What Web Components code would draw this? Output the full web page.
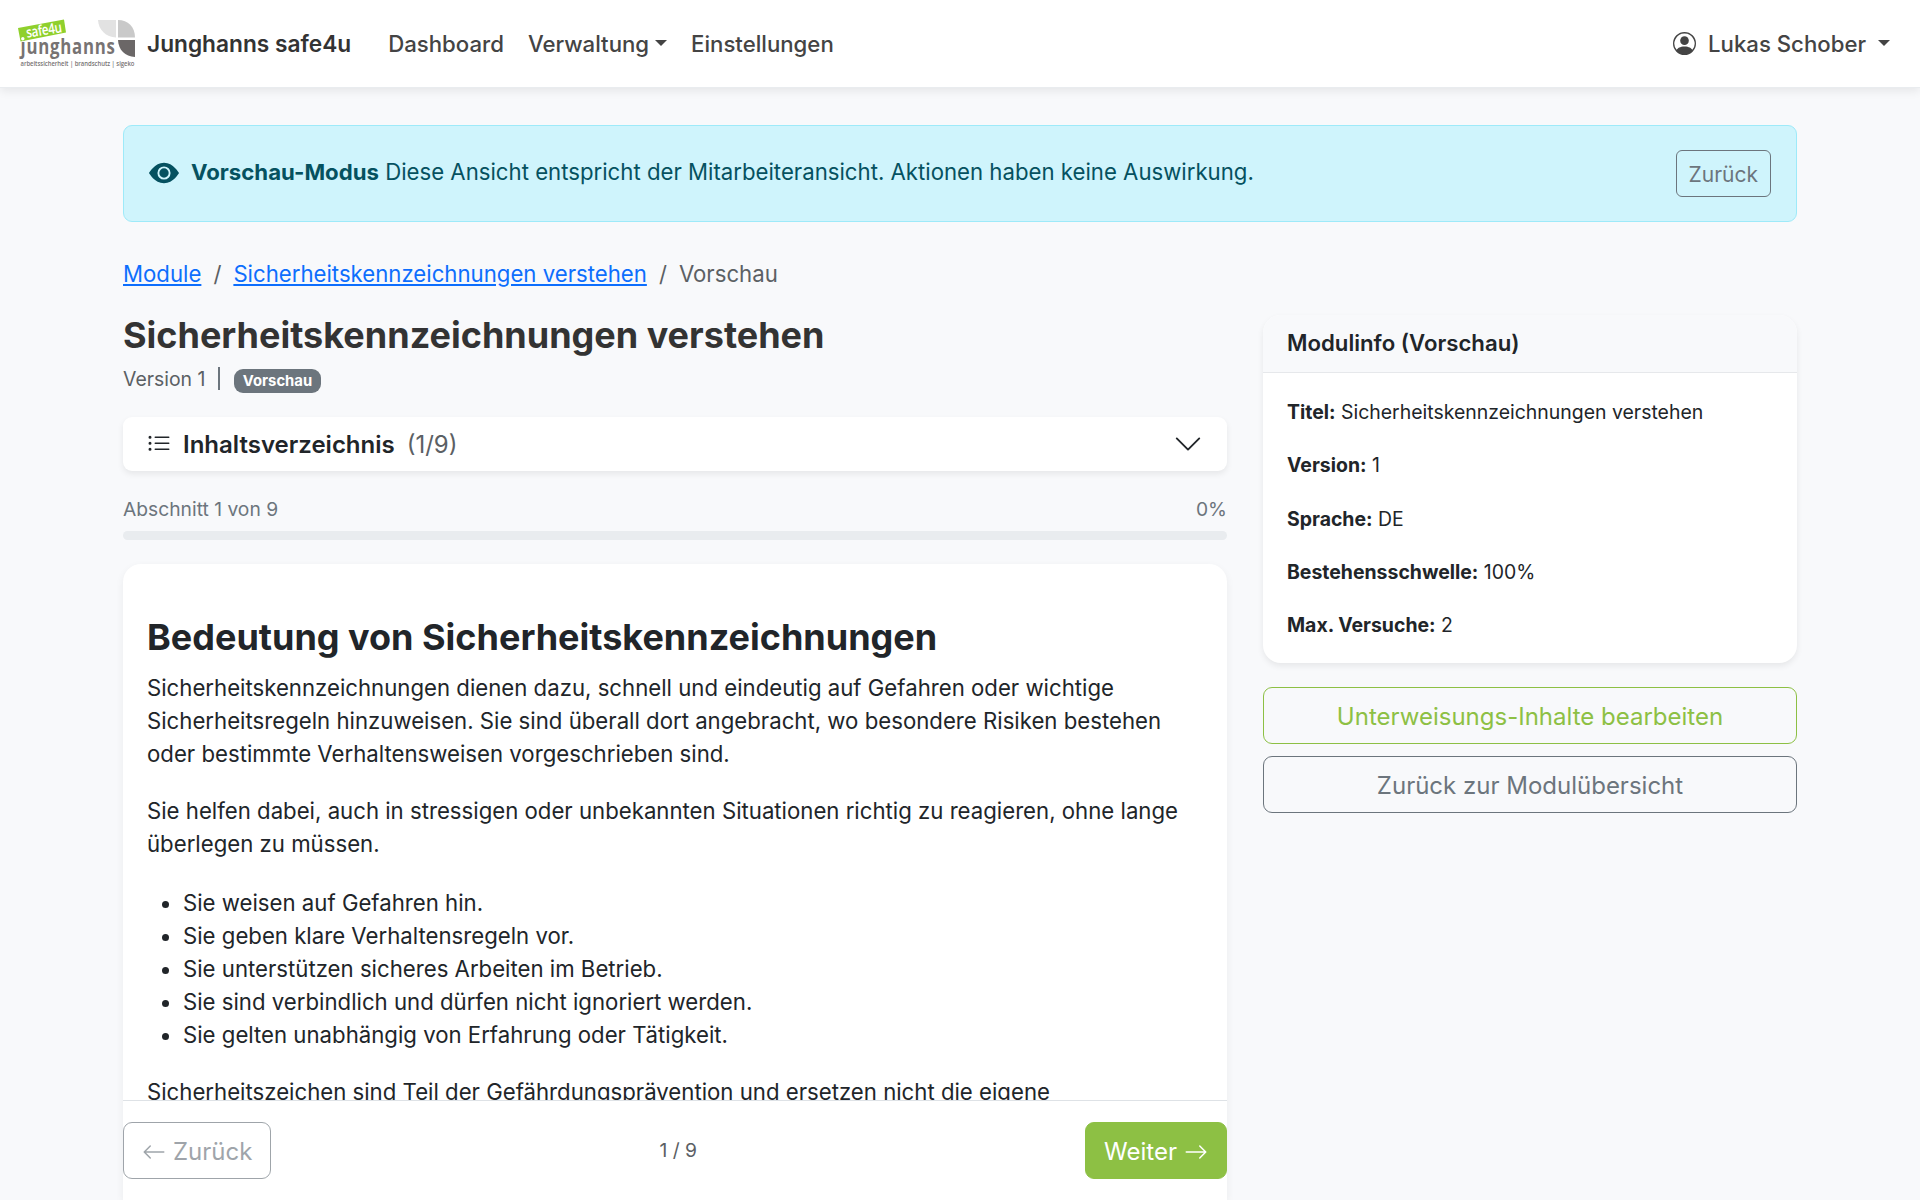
<!DOCTYPE html>
<html lang="de">
<head>
<meta charset="utf-8">
<title>Junghanns safe4u</title>
<style>
    html, body {
        height: 100%;
    }
    body {
        margin: 0;
        overflow: hidden;
        background: #f8f9fb;
        color: #212529;
        font-family: Inter, "Liberation Sans", sans-serif;
        font-size: 22.200px;
        line-height: 33px;
    }
</style>
</head>
<body>
<safe-app></safe-app>

<script>
customElements.define( 'safe-logo', class extends HTMLElement {

    constructor() {
        super();
        this.attachShadow({ mode: 'open' }).innerHTML = `
        <style>
            :host {
                display: block;
                width: 120px;
                height: 52px;
            }
            svg {
                display: block;
                overflow: visible;
            }
        </style>
        <svg width="120" height="52" viewBox="16 18 120 52" font-family="'Open Sans', sans-serif">
            <path fill="#e2e2e2" d="M98 20h18v17.500C106 37 98.500 30 98 20z"/>
            <path fill="#c9c9c9" d="M118 20c10 0 17 7 17 17.500h-17z"/>
            <path fill="#6b6767" d="M118 40h17v17c-10-.5-16.500-7-17-17z"/>
            <text font-size="21.500" font-weight="700" fill="#777373" textLength="121" transform="translate(20.500 53.500) scale(.78 1)">junghanns</text>
            <path fill="#8fd02c" d="M18 28l46-8.500 2 13L20.500 41.500z"/>
            <circle cx="22.800" cy="38.800" r="1.700" fill="#fff"/>
            <text font-size="14.500" font-weight="600" fill="#fff" textLength="45" transform="translate(27 37.800) rotate(-9) scale(.8 1)">safe4u</text>
            <text font-size="7" font-weight="600" fill="#777373" textLength="134" transform="translate(20.500 66) scale(.85 1)">arbeitssicherheit | brandschutz | sigeko</text>
        </svg>
        `;
    }
})

customElements.define( 'nav-item', class extends HTMLElement {

    constructor() {
        super();
        this.attachShadow({ mode: 'open' }).innerHTML = `
        <style>
            :host {
                display: flex;
                align-items: center;
                color: #444;
                font-weight: 450;
                white-space: nowrap;
            }
            .caret {
                display: none;
                width: 0;
                height: 0;
                margin: -1px 0 0 6px;
                border: 6px solid transparent;
                border-top-color: currentColor;
                border-bottom: 0;
            }
            :host([dropdown]) .caret {
                display: block;
            }
            :host([wide]) .caret {
                margin-left: 12px;
            }
        </style>
        <slot></slot><span class="caret"></span>
        `;
    }
})

customElements.define( 'nav-bar', class extends HTMLElement {

    constructor() {
        super();
        this.attachShadow({ mode: 'open' }).innerHTML = `
        <style>
            :host {
                display: flex;
                align-items: center;
                box-sizing: border-box;
                height: 88px;
                padding: 0 30px 0 16px;
                background: #fff;
                border-bottom: 1px solid #e9ecef;
                box-shadow: 0 3px 9px rgba(0, 0, 0, .08);
                position: relative;
                font-size: 22.200px;
            }
            .brand {
                margin: -1px 37px 0 11px;
                color: #333;
                font-size: 22.700px;
                font-weight: 600;
                white-space: nowrap;
            }
            .links {
                display: flex;
                gap: 24px;
                flex: 1;
            }
            nav-item {
                margin-top: -1px;
            }
            .user {
                width: 23px;
                height: 23px;
                margin-right: 12px;
            }
        </style>
        <safe-logo></safe-logo>
        <span class="brand">Junghanns safe4u</span>
        <div class="links">
            <nav-item>Dashboard</nav-item>
            <nav-item dropdown>Verwaltung</nav-item>
            <nav-item>Einstellungen</nav-item>
        </div>
        <nav-item dropdown wide>
            <svg class="user" viewBox="0 0 16 16" fill="currentColor"><path d="M11 6a3 3 0 1 1-6 0 3 3 0 0 1 6 0"/><path fill-rule="evenodd" d="M0 8a8 8 0 1 1 16 0A8 8 0 0 1 0 8m8-7a7 7 0 0 0-5.468 11.370C3.242 11.226 4.805 10 8 10s4.757 1.225 5.468 2.370A7 7 0 0 0 8 1"/></svg>
            <span>Lukas Schober</span>
        </nav-item>
        `;
    }
})

customElements.define( 'ui-button', class extends HTMLElement {

    constructor() {
        super();
        this.attachShadow({ mode: 'open' }).innerHTML = `
        <style>
            :host {
                display: flex;
                align-items: center;
                justify-content: center;
                gap: 7px;
                box-sizing: border-box;
                height: 57px;
                padding: 2px 18px 0;
                border: 1px solid #6c757d;
                border-radius: 9px;
                color: #6c757d;
                font-size: 24px;
                white-space: nowrap;
            }
            :host([small]) {
                height: 47px;
                padding: 2px 12px 0;
                border-radius: 6px;
                font-size: 21px;
            }
            :host([green]) {
                color: #8dc044;
                border-color: #8dc044;
            }
            :host([filled]) {
                color: #fff;
                background: #8dc044;
                border-color: #8dc044;
            }
            :host([disabled]) {
                opacity: .65;
            }
        </style>
        <slot></slot>
        `;
    }
})

customElements.define( 'preview-alert', class extends HTMLElement {

    constructor() {
        super();
        this.attachShadow({ mode: 'open' }).innerHTML = `
        <style>
            :host {
                display: flex;
                align-items: center;
                box-sizing: border-box;
                height: 97px;
                padding: 0 25px;
                background: #cff4fc;
                border: 1px solid #9eeaf9;
                border-radius: 9px;
                color: #055160;
            }
            svg {
                width: 30px;
                height: 30px;
                margin-right: 12px;
                margin-top: -1px;
            }
            .text {
                flex: 1;
                margin-top: -5px;
            }
        </style>
        <svg viewBox="0 0 16 16" fill="currentColor"><path d="M10.500 8a2.500 2.500 0 1 1-5 0 2.500 2.500 0 0 1 5 0"/><path d="M0 8s3-5.500 8-5.500S16 8 16 8s-3 5.500-8 5.500S0 8 0 8m8 3.500a3.500 3.500 0 1 0 0-7 3.500 3.500 0 0 0 0 7"/></svg>
        <div class="text"><slot></slot></div>
        <ui-button small>Zurück</ui-button>
        `;
    }
})

customElements.define( 'bread-crumb', class extends HTMLElement {

    constructor() {
        super();
        this.attachShadow({ mode: 'open' }).innerHTML = `
        <style>
            :host {
                display: flex;
                gap: 12px;
                color: #5b6064;
            }
            a {
                color: #0d6efd;
                text-decoration: underline;
            }
        </style>
        <a>Module</a><span>/</span><a>Sicherheitskennzeichnungen verstehen</a><span>/</span><span>Vorschau</span>
        `;
    }
})

customElements.define( 'module-header', class extends HTMLElement {

    constructor() {
        super();
        this.attachShadow({ mode: 'open' }).innerHTML = `
        <style>
            :host {
                display: block;
            }
            h1 {
                margin: 0 0 6px;
                color: #333;
                font-size: 36px;
                line-height: 43px;
                font-weight: 700;
            }
            .meta {
                display: flex;
                align-items: center;
                height: 30px;
                color: #5b6064;
                font-size: 19.400px;
            }
            .text {
                margin-top: 3px;
            }
            .bar {
                width: 1.500px;
                height: 23px;
                margin: 0 14px 0 13px;
                background: #6c757d;
            }
            .badge {
                margin-top: 5px;
                padding: 0 9px;
                border-radius: 9px;
                background: #6c757d;
                color: #fff;
                font-size: 14.800px;
                line-height: 24px;
                font-weight: 700;
            }
        </style>
        <h1>Sicherheitskennzeichnungen verstehen</h1>
        <div class="meta">
            <span class="text">Version 1</span><span class="bar"></span><span class="badge">Vorschau</span>
        </div>
        `;
    }
})

customElements.define( 'toc-toggle', class extends HTMLElement {

    constructor() {
        super();
        this.attachShadow({ mode: 'open' }).innerHTML = `
        <style>
            :host {
                display: flex;
                align-items: center;
                box-sizing: border-box;
                height: 54px;
                padding: 0 24px;
                background: #fff;
                border-radius: 9px;
                box-shadow: 0 3px 6px rgba(0, 0, 0, .075);
                font-size: 24px;
            }
            .list {
                width: 24px;
                height: 24px;
                margin: -1px 12px 0 0;
            }
            b {
                font-weight: 600;
            }
            .count {
                flex: 1;
                margin-left: 12px;
                color: #5b6064;
            }
            .chevron {
                width: 30px;
                height: 30px;
            }
        </style>
        <svg class="list" viewBox="0 0 16 16" fill="#212529"><path fill-rule="evenodd" d="M5 11.500a.5.5 0 0 1 .5-.5h9a.5.5 0 0 1 0 1h-9a.5.5 0 0 1-.5-.5m0-4a.5.5 0 0 1 .5-.5h9a.5.5 0 0 1 0 1h-9a.5.5 0 0 1-.5-.5m0-4a.5.5 0 0 1 .5-.5h9a.5.5 0 0 1 0 1h-9a.5.5 0 0 1-.5-.5m-3 1a1 1 0 1 0 0-2 1 1 0 0 0 0 2m0 4a1 1 0 1 0 0-2 1 1 0 0 0 0 2m0 4a1 1 0 1 0 0-2 1 1 0 0 0 0 2"/></svg>
        <b>Inhaltsverzeichnis</b>
        <span class="count">(1/9)</span>
        <svg class="chevron" viewBox="0 0 16 16" fill="none" stroke="#212529" stroke-linecap="round" stroke-linejoin="round"><path d="m2 5 6 6 6-6"/></svg>
        `;
    }
})

customElements.define( 'section-progress', class extends HTMLElement {

    constructor() {
        super();
        this.attachShadow({ mode: 'open' }).innerHTML = `
        <style>
            :host {
                display: block;
                color: #6c757d;
                font-size: 19.250px;
                line-height: 30px;
            }
            .row {
                display: flex;
                justify-content: space-between;
            }
            .track {
                height: 9px;
                margin-top: 7px;
                border-radius: 4.500px;
                background: #e9ecef;
            }
        </style>
        <div class="row"><span>Abschnitt 1 von 9</span><span>0%</span></div>
        <div class="track"></div>
        `;
    }
})

customElements.define( 'content-card', class extends HTMLElement {

    constructor() {
        super();
        this.attachShadow({ mode: 'open' }).innerHTML = `
        <style>
            :host {
                display: flex;
                flex-direction: column;
                background: #fff;
                border-radius: 18px 18px 0 0;
                box-shadow: 0 3px 9px rgba(0, 0, 0, .06);
            }
            .body {
                flex: 1;
                min-height: 0;
                overflow: hidden;
                padding: 52px 24px 0;
            }
            ::slotted(h2) {
                margin: 0 0 12px;
                font-size: 36px;
                line-height: 43px;
                font-weight: 700;
            }
            ::slotted(p) {
                margin: 0 0 24px;
            }
            ::slotted(ul) {
                margin: 26px 0 24px;
                padding-left: 36px;
            }
            .footer {
                display: flex;
                align-items: center;
                justify-content: space-between;
                box-sizing: border-box;
                height: 100px;
                border-top: 1px solid #dee2e6;
            }
            .page {
                color: #5b6064;
                font-size: 19.250px;
            }
            svg {
                width: 24px;
                height: 24px;
            }
        </style>
        <div class="body"><slot></slot></div>
        <div class="footer">
            <ui-button disabled><svg viewBox="0 0 16 16" fill="currentColor"><path fill-rule="evenodd" d="M15 8a.5.5 0 0 0-.5-.5H2.707l3.147-3.146a.5.5 0 1 0-.708-.708l-4 4a.5.5 0 0 0 0 .708l4 4a.5.5 0 0 0 .708-.708L2.707 8.500H14.500A.5.5 0 0 0 15 8"/></svg><span>Zurück</span></ui-button>
            <span class="page">1 / 9</span>
            <ui-button filled><span>Weiter</span><svg viewBox="0 0 16 16" fill="currentColor"><path fill-rule="evenodd" d="M1 8a.5.5 0 0 1 .5-.5h11.793l-3.147-3.146a.5.5 0 0 1 .708-.708l4 4a.5.5 0 0 1 0 .708l-4 4a.5.5 0 0 1-.708-.708L13.293 8.500H1.500A.5.5 0 0 1 1 8"/></svg></ui-button>
        </div>
        `;
    }
})

customElements.define( 'info-card', class extends HTMLElement {

    constructor() {
        super();
        this.attachShadow({ mode: 'open' }).innerHTML = `
        <style>
            :host {
                display: block;
                box-sizing: border-box;
                height: 348px;
                overflow: hidden;
                background: #fff;
                border-radius: 18px;
                box-shadow: 0 3px 6px rgba(0, 0, 0, .075);
            }
            .head {
                box-sizing: border-box;
                height: 58px;
                padding: 11px 24px;
                background: #f8f9fb;
                border-bottom: 1px solid #e6e8eb;
                font-weight: 600;
            }
            .body {
                padding: 25px 24px;
                font-size: 19.450px;
                line-height: 29.300px;
            }
            ::slotted(p) {
                margin: 0 0 24px;
            }
        </style>
        <div class="head">Modulinfo (Vorschau)</div>
        <div class="body"><slot></slot></div>
        `;
    }
})

customElements.define( 'safe-app', class extends HTMLElement {

    constructor() {
        super();
        this.attachShadow({ mode: 'open' })
        this.#render();
    }

    #render() {
        this.shadowRoot.innerHTML = `
        <style>
            :host {
                display: flex;
                flex-direction: column;
                height: 1200px;
            }
            main {
                flex: 1;
                min-height: 0;
                display: flex;
                flex-direction: column;
                width: 1674px;
                margin: 0 auto;
                padding-top: 37px;
            }
            bread-crumb {
                margin: 35px 0 24px;
            }
            .columns {
                flex: 1;
                min-height: 0;
                display: grid;
                grid-template-columns: 1104px 534px;
                gap: 36px;
            }
            .left {
                display: flex;
                flex-direction: column;
                min-height: 0;
            }
            toc-toggle {
                margin: 24px 0 23px;
            }
            content-card {
                flex: 1;
                min-height: 0;
                margin-top: 24px;
            }
            .right {
                display: flex;
                flex-direction: column;
                gap: 12px;
                padding-top: 1px;
            }
            info-card {
                margin-bottom: 12px;
            }
            b {
                font-weight: 700;
            }
        </style>
        <nav-bar></nav-bar>
        <main>
            <preview-alert><b>Vorschau-Modus</b> Diese Ansicht entspricht der Mitarbeiteransicht. Aktionen haben keine Auswirkung.</preview-alert>
            <bread-crumb></bread-crumb>
            <div class="columns">
                <div class="left">
                    <module-header></module-header>
                    <toc-toggle></toc-toggle>
                    <section-progress></section-progress>
                    <content-card>
                        <h2>Bedeutung von Sicherheitskennzeichnungen</h2>
                        <p>Sicherheitskennzeichnungen dienen dazu, schnell und eindeutig auf Gefahren oder wichtige Sicherheitsregeln hinzuweisen. Sie sind überall dort angebracht, wo besondere Risiken bestehen oder bestimmte Verhaltensweisen vorgeschrieben sind.</p>
                        <p>Sie helfen dabei, auch in stressigen oder unbekannten Situationen richtig zu reagieren, ohne lange überlegen zu müssen.</p>
                        <ul>
                            <li>Sie weisen auf Gefahren hin.</li>
                            <li>Sie geben klare Verhaltensregeln vor.</li>
                            <li>Sie unterstützen sicheres Arbeiten im Betrieb.</li>
                            <li>Sie sind verbindlich und dürfen nicht ignoriert werden.</li>
                            <li>Sie gelten unabhängig von Erfahrung oder Tätigkeit.</li>
                        </ul>
                        <p>Sicherheitszeichen sind Teil der Gefährdungsprävention und ersetzen nicht die eigene</p>
                    </content-card>
                </div>
                <div class="right">
                    <info-card>
                        <p><b>Titel:</b> Sicherheitskennzeichnungen verstehen</p>
                        <p><b>Version:</b> 1</p>
                        <p><b>Sprache:</b> DE</p>
                        <p><b>Bestehensschwelle:</b> 100%</p>
                        <p><b>Max. Versuche:</b> 2</p>
                    </info-card>
                    <ui-button green>Unterweisungs-Inhalte bearbeiten</ui-button>
                    <ui-button>Zurück zur Modulübersicht</ui-button>
                </div>
            </div>
        </main>
        `;
    }
})
</script>
</body>
</html>
